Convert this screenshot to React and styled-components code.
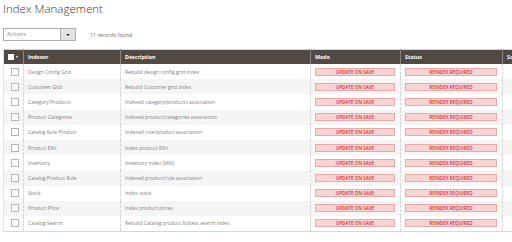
import styled, { createGlobalStyle } from 'styled-components'

const GlobalStyle = createGlobalStyle`
    html, body {
        margin: 0;
        background: #fff;
        font-family: "Open Sans", "Noto Sans", sans-serif;
        overflow: hidden;
    }
`

const indexers = [
    ['Design Config Grid', 'Rebuild design config grid index'],
    ['Customer Grid', 'Rebuild Customer grid index'],
    ['Category Products', 'Indexed category/products association'],
    ['Product Categories', 'Indexed product/categories association'],
    ['Catalog Rule Product', 'Indexed rule/product association'],
    ['Product EAV', 'Index product EAV'],
    ['Inventory', 'Inventory index (MSI)'],
    ['Catalog Product Rule', 'Indexed product/rule association'],
    ['Stock', 'Index stock'],
    ['Product Price', 'Index product prices'],
    ['Catalog Search', 'Rebuild Catalog product fulltext search index'],
]

export default function App() {
    return (
        <Page>
            <GlobalStyle />
            <Title>Index Management</Title>
            <Toolbar>
                <Select>
                    <SelectLabel>Actions</SelectLabel>
                    <SelectArrow />
                </Select>
                <Found>11 records found</Found>
            </Toolbar>
            <Grid>
                <colgroup>
                    <col style={{ width: 20 }} />
                    <col style={{ width: 97 }} />
                    <col style={{ width: 190 }} />
                    <col style={{ width: 90 }} />
                    <col style={{ width: 102 }} />
                    <col style={{ width: 60 }} />
                </colgroup>
                <thead>
                    <tr>
                        <Th>
                            <MassSelect>
                                <span />
                                <i />
                            </MassSelect>
                        </Th>
                        <Th>Indexer</Th>
                        <Th>Description</Th>
                        <Th>Mode</Th>
                        <Th>Status</Th>
                        <Th>Schedule Status</Th>
                    </tr>
                </thead>
                <tbody>
                    {indexers.map(([name, desc], i) => (
                        <Row key={name} $odd={i % 2 === 1}>
                            <Td><Check /></Td>
                            <Td>{name}</Td>
                            <Td>{desc}</Td>
                            <Td><Badge>Update on Save</Badge></Td>
                            <Td><Badge>Reindex Required</Badge></Td>
                            <Td />
                        </Row>
                    ))}
                </tbody>
            </Grid>
        </Page>
    )
}

const Page = styled.div`
    width: 700px;
    padding: 0 3px;
`

const Title = styled.h1`
    margin: 0;
    padding-top: 1px;
    font-size: 11.5px;
    font-weight: 300;
    line-height: 15px;
    color: #41362f;
`

const Toolbar = styled.div`
    display: flex;
    align-items: center;
    gap: 14px;
    margin-top: 12px;
`

const Select = styled.div`
    display: flex;
    width: 73px;
    height: 13px;
    box-sizing: border-box;
    border: 1px solid #adadad;
    background: #fff;
`

const SelectLabel = styled.span`
    flex: 1;
    padding-left: 3px;
    font-size: 5.5px;
    line-height: 11px;
    color: #8a8a8a;
`

const SelectArrow = styled.span`
    width: 14px;
    border-left: 1px solid #adadad;
    background: #e3e3e3;
    display: flex;
    align-items: center;
    justify-content: center;
    &::after {
        content: '';
        border-left: 2px solid transparent;
        border-right: 2px solid transparent;
        border-top: 2px solid #41362f;
    }
`

const Found = styled.span`
    font-size: 5.3px;
    color: #6b6b6b;
`

const Grid = styled.table`
    margin-top: 8px;
    width: 559px;
    table-layout: fixed;
    border-collapse: collapse;
    border-top: 1px solid #d6d6d6;
    border-left: 1px solid #e3e3e3;
    border-bottom: 1px solid #d6d6d6;
`

const Th = styled.th`
    height: 14px;
    padding: 0 0 0 4px;
    background: #514943;
    border-left: 1px solid #8a837f;
    color: #fff;
    font-size: 5.3px;
    font-weight: 700;
    text-align: left;
    white-space: nowrap;
    overflow: hidden;
    &:first-child {
        border-left: none;
    }
`

const MassSelect = styled.div`
    display: flex;
    align-items: center;
    gap: 2px;
    span {
        width: 6px;
        height: 6px;
        background: #fff;
    }
    i {
        border-left: 1.5px solid transparent;
        border-right: 1.5px solid transparent;
        border-top: 2px solid #fff;
    }
`

const Row = styled.tr`
    height: 15.2px;
    background: ${p => (p.$odd ? '#f5f5f5' : '#fff')};
`

const Td = styled.td`
    padding: 0 0 0 4px;
    border-left: 1px dashed #d6d6d6;
    color: #808080;
    font-size: 5px;
    white-space: nowrap;
    overflow: hidden;
    &:first-child {
        border-left: none;
        padding-left: 7px;
    }
`

const Check = styled.div`
    width: 6px;
    height: 6px;
    border: 1px solid #b5b5b5;
    background: #fff;
`

const Badge = styled.div`
    width: calc(100% - 5px);
    height: 8px;
    box-sizing: border-box;
    background: #f9d4d4;
    border: 1px solid #eca7a7;
    color: #e22626;
    font-size: 4.6px;
    line-height: 6px;
    text-align: center;
    text-transform: uppercase;
    font-weight: 600;
`
